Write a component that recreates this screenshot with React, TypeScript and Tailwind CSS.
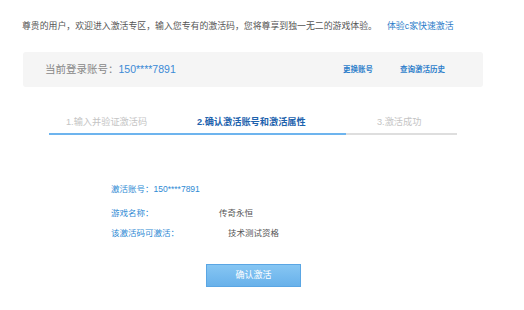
import React from "react";

const steps = [
  { label: "1.输入并验证激活码", w: "w-[148px]", pad: "pl-[17px]", cls: "text-[#c4c4c4]" },
  { label: "2.确认激活账号和激活属性", w: "w-[180px]", pad: "", cls: "text-[#1d62ad] font-bold" },
  { label: "3.激活成功", w: "flex-1", pad: "", cls: "text-[#c4c4c4]" },
];

const App = () => {
  return (
    <div className="w-[524px] h-[310px] bg-white font-['Liberation_Sans','Noto_Sans_CJK_SC',sans-serif] overflow-hidden">
      {/* intro */}
      <div className="pt-[20px] pl-[22px] text-[8.9px] leading-[12px] text-[#555] flex">
        <span>尊贵的用户，欢迎进入激活专区，输入您专有的激活码，您将尊享到独一无二的游戏体验。</span>
        <a className="ml-[10px] text-[#2a7cc9]">体验c家快速激活</a>
      </div>

      {/* account bar */}
      <div className="mt-[20px] ml-[23px] w-[460px] h-[35px] bg-[#f5f5f5] rounded-[3px] flex items-center pl-[22px] pr-[38px]">
        <span className="text-[10.5px] text-[#888]">当前登录账号：</span>
        <span className="text-[10.5px] text-[#3b8ad6]">150****7891</span>
        <div className="ml-auto flex gap-[27px] text-[7.5px] text-[#2f7fcb] font-semibold">
          <a>更换账号</a>
          <a>查询激活历史</a>
        </div>
      </div>

      {/* steps */}
      <div className="mt-[28px] ml-[49px] w-[408px]">
        <div className="flex text-[9.2px] leading-[14px]">
          {steps.map((s) => (
            <div key={s.label} className={`${s.w} ${s.pad}`}>
              <span className={s.cls}>{s.label}</span>
            </div>
          ))}
        </div>
        <div className="mt-[4px] flex h-[2px]">
          <div className="w-[297px] bg-[#6db4ee]" />
          <div className="flex-1 bg-[#dedede]" />
        </div>
      </div>

      {/* details */}
      <div className="mt-[48px] ml-[111px] text-[8.5px] leading-[12px]">
        <div className="text-[#2e8ad4]">激活账号：150****7891</div>
        <div className="mt-[12px] flex">
          <span className="w-[108px] text-[#2e8ad4]">游戏名称：</span>
          <span className="text-[#555]">传奇永恒</span>
        </div>
        <div className="mt-[8px] flex">
          <span className="w-[117px] text-[#2e8ad4]">该激活码可激活：</span>
          <span className="text-[#555]">技术测试资格</span>
        </div>
      </div>

      {/* button */}
      <button className="mt-[25px] ml-[206px] w-[95px] h-[23px] bg-gradient-to-b from-[#86c6f3] to-[#68b1ea] border border-[#5aa6e4] text-white text-[9px] flex items-center justify-center">
        确认激活
      </button>
    </div>
  );
};

export default App;
